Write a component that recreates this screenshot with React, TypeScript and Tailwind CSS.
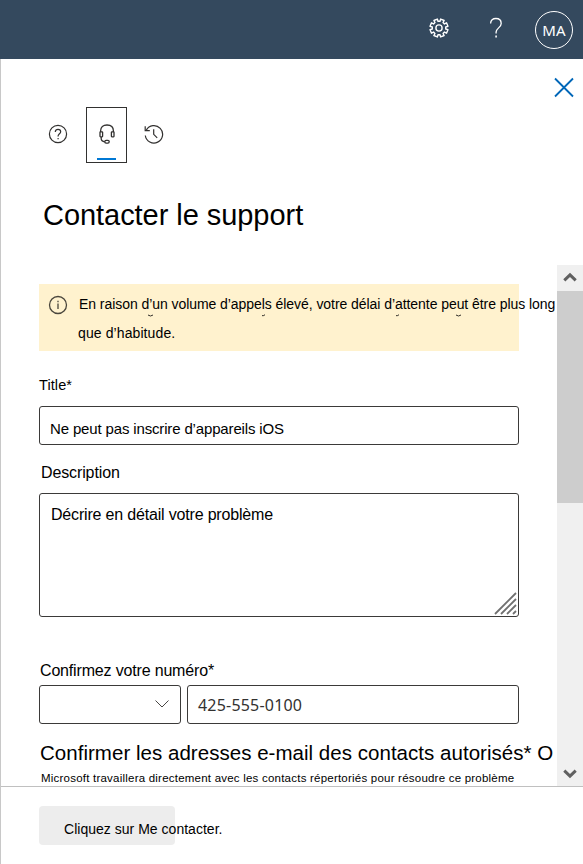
import React from "react";

const TEETH = 8;

// Outline of a cog with trapezoid teeth, centred on 0,0.
function cogPath(outer: number, inner: number): string {
  const pts: string[] = [];
  const step = 360 / TEETH;
  for (let i = 0; i < TEETH; i++) {
    const base = i * step + step / 2;
    const corners: [number, number][] = [
      [inner, -14],
      [outer, -12],
      [outer, 12],
      [inner, 14],
    ];
    for (const [r, offset] of corners) {
      const a = ((base + offset) * Math.PI) / 180;
      pts.push(`${(r * Math.cos(a)).toFixed(2)} ${(r * Math.sin(a)).toFixed(2)}`);
    }
  }
  return `M${pts.join("L")}Z`;
}

function GearIcon() {
  return (
    <svg className="h-[22px] w-[22px]" viewBox="-11 -11 22 22" fill="none" stroke="#fff" strokeWidth="1.4" strokeLinejoin="round">
      <path d={cogPath(9.1, 6.8)} />
      <circle r="3.1" />
    </svg>
  );
}

function QuestionIcon() {
  return (
    <svg className="h-[22px] w-[14px]" viewBox="0 0 14 22" fill="none" stroke="#fff" strokeWidth="1.3">
      <path d="M1.6 6.6C1.6 3.2 3.8 1.5 6.9 1.5s5.300 1.800 5.300 4.900c0 4.200-5.100 4.700-5.100 8.700v1.300" />
      <path d="M7.1 18.400v2" strokeWidth="1.6" />
    </svg>
  );
}

function HelpIcon() {
  return (
    <svg className="-mt-0.5 h-5 w-5" viewBox="0 0 20 20" fill="none" stroke="#323130" strokeWidth="1.2">
      <circle cx="10" cy="10" r="8.6" />
      <path d="M7.3 7.9C7.3 6.2 8.4 5.3 10 5.3s2.700.9 2.700 2.400c0 2-2.600 2.200-2.600 4.400v.5" />
      <path d="M10.1 13.900v1.300" />
    </svg>
  );
}

function HeadsetIcon() {
  return (
    <svg className="h-[22px] w-[18px]" viewBox="0 0 18 22" fill="none" stroke="#323130" strokeWidth="1.3">
      <path d="M2.600 9V8C2.600 4.200 5.200 2 9 2s6.400 2.200 6.400 6V9" />
      <rect x="2" y="8.800" width="2.600" height="5" rx=".5" />
      <rect x="13.400" y="8.800" width="2.600" height="5" rx=".5" />
      <path d="M3.200 14v1.600c0 1.900 1 3.100 3.600 3.200" />
      <rect x="6.800" y="17.300" width="4.400" height="2.800" rx="1.300" />
    </svg>
  );
}

function HistoryIcon() {
  return (
    <svg className="-mt-0.5 h-5 w-5" viewBox="0 0 20 20" fill="none" stroke="#323130" strokeWidth="1.2">
      <path d="M1.3 11.500A8.700 8.700 0 1 0 2.300 6.100" />
      <path d="M1.2 2.300v4.300h4.600" />
      <path d="M9.7 5.200v5.100l3.500 3.500" />
    </svg>
  );
}

function InfoIcon() {
  return (
    <svg className="h-5 w-5 shrink-0" viewBox="0 0 20 20" fill="none" stroke="#4a463c" strokeWidth="1.3">
      <circle cx="10" cy="10" r="8.5" />
      <path d="M10 8.500v5.500M10 5.800v1.500" />
    </svg>
  );
}

function Header() {
  return (
    <header className="flex h-[59px] shrink-0 items-center bg-[#34495e] pl-[428px]">
      <div className="flex h-full items-center pb-1">
        <GearIcon />
        <span className="w-[39px]" />
        <QuestionIcon />
      </div>
      <div className="ml-8 flex h-[38px] w-[38px] items-center justify-center rounded-full border border-white pt-0.5 font-['Noto_Sans',sans-serif] text-[15px] tracking-[0.2px] text-white">
        MA
      </div>
    </header>
  );
}

function Tabs() {
  return (
    <nav className="ml-[47px] flex h-14 items-center">
      <HelpIcon />
      <div className="ml-[18px] flex h-14 w-[41px] flex-col items-center border border-[#323130] pt-[15px]">
        <HeadsetIcon />
        <span className="mt-[13px] h-0.5 w-[19px] bg-[#0078d4]" />
      </div>
      <div className="ml-[17px]">
        <HistoryIcon />
      </div>
    </nav>
  );
}

function Scrollbar() {
  return (
    <div className="flex w-[26px] shrink-0 flex-col bg-[#f0f0f0]">
      <div className="flex h-[26px] items-center justify-center pb-0.5">
        <svg className="h-3 w-4" viewBox="0 0 16 12" fill="none" stroke="#606060" strokeWidth="3">
          <path d="M2.300 9.300L8 3.800l5.700 5.500" />
        </svg>
      </div>
      <div className="h-[212px] bg-[#cdcdcd]" />
      <div className="mt-auto flex h-[26px] items-center justify-center pt-px">
        <svg className="h-3 w-4" viewBox="0 0 16 12" fill="none" stroke="#606060" strokeWidth="3">
          <path d="M2.300 2.700L8 8.200l5.700-5.500" />
        </svg>
      </div>
    </div>
  );
}

function Banner() {
  return (
    <div className="relative mt-[19px] flex h-[67px] w-[480px] bg-[#fff2ce] pl-[9px] pt-[11px] text-[14px] leading-[28px]">
      <InfoIcon />
      <div className="-mt-[5px] ml-[11px] whitespace-nowrap">
        <p className="tracking-[-0.06px]">En raison d’un volume d’appels élevé, votre délai d’attente peut être plus long</p>
        <p className="-ml-px mt-px tracking-[0.1px]">que d’habitude.</p>
      </div>
      <svg className="absolute left-0 top-[30px] h-1 w-[480px]" viewBox="0 0 480 4" fill="none" stroke="#33302a" strokeWidth="1">
        <path d="M109 1q2.500 2 5 0M223 1.700q2 .2 3-1M357 1.700q2 .2 3-1M417 1q2.500 2 5 0" />
      </svg>
    </div>
  );
}

function Form() {
  return (
    <div className="flex w-[556px] flex-col overflow-hidden whitespace-nowrap pl-[38px]">
      <Banner />
      <label className="mt-6 h-5 text-[14.5px] leading-5 tracking-[0.1px]">Title*</label>
      <div className="mt-[11px] h-[39px] w-[480px] rounded-[3px] border border-[#3b3a39] pl-2.5 pt-3 text-[15px] leading-5 tracking-[-0.15px]">
        Ne peut pas inscrire d’appareils iOS
      </div>
      <label className="ml-0.5 mt-[18px] h-5 text-[16px] leading-5 tracking-[-0.12px]">Description</label>
      <div className="mt-[10px] flex h-[124px] w-[480px] justify-between rounded-[3px] border border-[#3b3a39] pl-[11px] pt-[11px] text-[16px] leading-5 tracking-[-0.18px]">
        <span>Décrire en détail votre problème</span>
        <svg className="mr-px mt-auto h-6 w-6" viewBox="0 0 24 24" stroke="#707070" strokeWidth="1.8">
          <path d="M2 22L23 1M8 22L23 7M14 22l9-9M20 22l3-3" />
        </svg>
      </div>
      <label className="ml-px mt-11 h-5 text-[16px] leading-5 tracking-[-0.17px]">Confirmez votre numéro*</label>
      <div className="mt-1 flex gap-1.5">
        <div className="flex h-[39px] w-[142px] items-center justify-end rounded-[3px] border border-[#3b3a39] pb-0.5 pr-[10px]">
          <svg className="h-4 w-4" viewBox="0 0 16 16" fill="none" stroke="#484644">
            <path d="M1.500 4.500L8 11l6.500-6.500" />
          </svg>
        </div>
        <div className="h-[39px] w-[332px] rounded-[3px] border border-[#3b3a39] pl-2.5 pt-[7px] font-['Noto_Sans',sans-serif] text-[16px] leading-6 text-[#323130] tracking-[0.2px]">
          425-555-0100
        </div>
      </div>
      <h2 className="ml-px mt-[17px] h-6 text-[20.5px] leading-6 tracking-[0.03px]">Confirmer les adresses e-mail des contacts autorisés* O</h2>
      <p className="ml-0.5 mt-[5px] h-4 text-[11.5px] leading-4 tracking-[0.22px]">
        Microsoft travaillera directement avec les contacts répertoriés pour résoudre ce problème
      </p>
    </div>
  );
}

export default function App() {
  return (
    <div className="flex h-[864px] w-[583px] flex-col overflow-hidden bg-white font-['Liberation_Sans',Arial,sans-serif] text-black">
      <Header />
      <main className="flex min-h-0 flex-1 flex-col border-l border-[#c8c8c8]">
        <div className="flex h-12 shrink-0 justify-end pr-2 pt-[18px]">
          <svg className="h-[22px] w-[22px]" viewBox="0 0 22 22" stroke="#0067b8" strokeWidth="1.8">
            <path d="M2 1.500l18 18M20 1.500l-18 18" />
          </svg>
        </div>
        <Tabs />
        <h1 className="ml-[42px] mt-9 h-8 text-[29px] leading-8 tracking-[-0.05px]">Contacter le support</h1>
        <section className="mt-[34px] flex h-[521px] shrink-0 overflow-hidden">
          <Form />
          <Scrollbar />
        </section>
        <footer className="flex-1 border-t border-[#c0c0c0] pl-[38px] pt-[19px]">
          <button className="h-[39px] w-[136px] whitespace-nowrap rounded-sm bg-[#ededed] pl-[25px] pt-[7px] text-left text-[14px] tracking-[0.02px]">
            Cliquez sur Me contacter.
          </button>
        </footer>
      </main>
    </div>
  );
}
